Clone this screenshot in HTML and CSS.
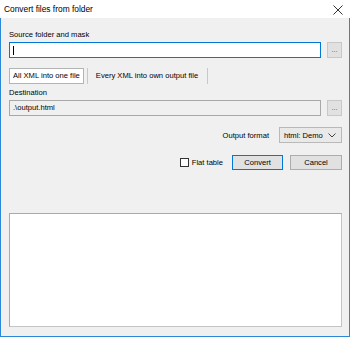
FILE: index.html
```html
<!DOCTYPE html>
<html lang="en">
<head>
  <meta charset="UTF-8" />
  <title>Convert files from folder</title>
  <link rel="stylesheet" href="styles.css">
</head>
<body>
  <div class="window">
    <div class="titlebar">
      <span class="title">Convert files from folder</span>
      <svg class="close" width="10" height="10" viewBox="0 0 10 10">
        <path d="M0.5 0.5 L9.5 9.5 M9.5 0.5 L0.5 9.5" stroke="#333" stroke-width="1" fill="none"/>
      </svg>
    </div>

    <div class="content">
      <div class="label first">Source folder and mask</div>
      <div class="field-row">
        <div class="input focused"><span class="caret"></span></div>
        <button class="browse">...</button>
      </div>

      <div class="tabs">
        <div class="tab active">All XML into one file</div>
        <div class="sep"></div>
        <div class="tab">Every XML into own output file</div>
        <div class="sep"></div>
      </div>

      <div class="label">Destination</div>
      <div class="field-row">
        <div class="input readonly">.\output.html</div>
        <button class="browse">...</button>
      </div>

      <div class="format-row">
        <span class="format-label">Output format</span>
        <div class="select">
          <span>html: Demo</span>
          <svg width="8" height="5" viewBox="0 0 8 5">
            <path d="M0.5 0.5 L4 4 L7.5 0.5" stroke="#444" stroke-width="1" fill="none"/>
          </svg>
        </div>
      </div>

      <div class="action-row">
        <label class="check"><span class="box"></span>Flat table</label>
        <button class="btn default">Convert</button>
        <button class="btn">Cancel</button>
      </div>

      <div class="log"></div>
    </div>
  </div>
</body>
</html>
```

FILE: styles.css
```css
body {
  margin: 0;
  width: 350px;
  height: 337px;
  font-family: "Liberation Sans", Arial, sans-serif;
  font-size: 7.6px;
  color: #000;
  background: #f0f0f0;
  white-space: nowrap;
}

.window {
  width: 350px;
  height: 337px;
  display: flex;
  flex-direction: column;
}

.titlebar {
  height: 18px;
  background: #fff;
  display: flex;
  align-items: center;
  justify-content: space-between;
  padding: 0 7px 0 4px;
  font-size: 8.4px;
  color: #000;
}

.close {
  margin-top: 1px;
}

.content {
  flex: 1;
  border: 1px solid #2b88d8;
  border-top: none;
  padding: 0 7px 8px 8px;
  display: flex;
  flex-direction: column;
}

.label {
  height: 14px;
  line-height: 14px;
  color: #000;
}

.label.first {
  margin-top: 10px;
}

.field-row {
  display: flex;
  gap: 6px;
  height: 16px;
}

.input {
  flex: 1;
  box-sizing: border-box;
  height: 16px;
  border: 1px solid #7a7a7a;
  background: #fff;
  padding: 0 3px;
  line-height: 14px;
  display: flex;
  align-items: center;
}

.input.focused {
  border-color: #0078d7;
}

.caret {
  width: 1px;
  height: 9px;
  background: #000;
}

.input.readonly {
  background: #f0f0f0;
  border-color: #a8a8a8;
  color: #000;
}

.browse {
  width: 15px;
  height: 16px;
  box-sizing: border-box;
  padding: 0;
  border: 1px solid #c8c8c8;
  background: #e1e1e1;
  font-family: inherit;
  font-size: 7px;
  line-height: 12px;
  color: #555;
}

.tabs {
  display: flex;
  align-items: center;
  height: 16px;
  margin-top: 10px;
  margin-bottom: 2px;
}

.tab {
  height: 16px;
  box-sizing: border-box;
  line-height: 14px;
  padding: 0 3px;
  border: 1px solid transparent;
  color: #000;
}

.tab.active {
  background: #fff;
  border-color: #b4b4b4;
}

.tabs .tab:nth-child(3) {
  padding: 0 5px;
}

.sep {
  width: 1px;
  height: 16px;
  background: #c8c8c8;
  margin: 0 2px 0 3px;
}

.format-row {
  display: flex;
  justify-content: flex-end;
  align-items: center;
  gap: 10px;
  margin-top: 11px;
  height: 16px;
}

.format-label {
  color: #000;
}

.select {
  width: 63px;
  height: 16px;
  box-sizing: border-box;
  border: 1px solid #b9b9b9;
  background: #e9e9e9;
  display: flex;
  align-items: center;
  justify-content: space-between;
  padding: 0 5px 0 4px;
}

.action-row {
  display: flex;
  justify-content: flex-end;
  align-items: center;
  margin-top: 12px;
  height: 15px;
}

.check {
  display: flex;
  align-items: center;
  gap: 3px;
  color: #000;
}

.box {
  width: 9px;
  height: 9px;
  box-sizing: border-box;
  border: 1px solid #333;
  background: #fff;
}

.btn {
  width: 52px;
  height: 15px;
  box-sizing: border-box;
  padding: 0;
  border: 1px solid #adadad;
  background: #e1e1e1;
  font-family: inherit;
  font-size: 7.6px;
  color: #000;
  margin-left: 7px;
}

.btn.default {
  width: 51px;
  margin-left: 9px;
  border: 1px solid #0078d7;
}

.log {
  margin-top: 43px;
  height: 114px;
  box-sizing: border-box;
  border: 1px solid #c4c4c4;
  border-top-color: #a9a9a9;
  border-left-color: #a9a9a9;
  background: #fff;
}
```
